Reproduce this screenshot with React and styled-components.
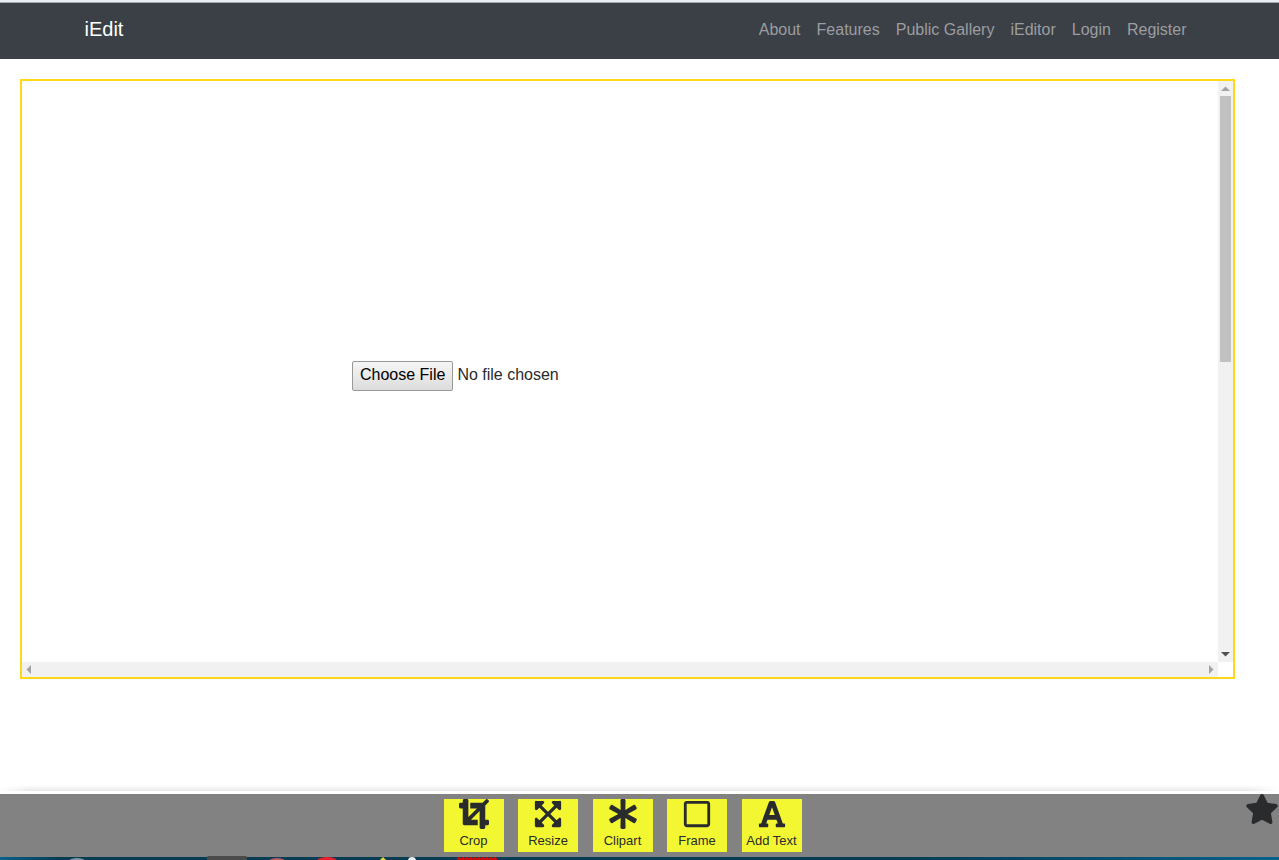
import React from 'react';
import styled, { createGlobalStyle } from 'styled-components';
import { FaCrop, FaExpandArrowsAlt, FaAsterisk, FaRegSquare, FaFont, FaStar } from 'react-icons/fa';

const Global = createGlobalStyle`
  *, *::before, *::after { box-sizing: border-box; }
  body {
    margin: 0;
    background: #fff;
    color: #292b2c;
    font: 16px/24px "Liberation Sans", Arial, sans-serif;
  }
`;

const Page = styled.div`
  display: flex;
  flex-direction: column;
  min-height: 100vh;
`;

const Header = styled.header`
  border-top: 2px solid #e9eef3;
  background: #3b3f46;
`;

const HeaderInner = styled.nav`
  display: flex;
  align-items: center;
  justify-content: space-between;
  height: 56px;
  max-width: 1140px;
  margin: 0 auto;
  padding: 0 15px 2px;
`;

const HeaderLine = styled.div`
  height: 1px;
  background: #aaa8ae;
`;

const Brand = styled.a`
  padding-bottom: 2px;
  color: #fff;
  font-size: 20px;
  line-height: 30px;
  text-decoration: none;
`;

const NavList = styled.ul`
  display: flex;
  margin: 0;
  padding: 0;
  list-style: none;
`;

const NavLink = styled.a`
  display: block;
  padding: 8px;
  color: #9b9da0;
  text-decoration: none;
`;

const Editor = styled.main`
  display: grid;
  grid-template-columns: 1fr 15px;
  grid-template-rows: 1fr 15px;
  width: 95%;
  height: 600px;
  margin: 20px 0 0 20px;
  border: 2px solid #ffd918;
`;

const Canvas = styled.div`
  display: flex;
  align-items: center;
  padding: 8px 0 0 330px;
`;

const FileInput = styled.input`
  width: 320px;
  height: 30px;
  color: #292b2c;
  font: inherit;
  &::file-selector-button {
    height: 30px;
    margin: 0 4px 0 0;
    padding: 0 7px 2px;
    border: 1px solid #999;
    border-radius: 2px;
    background: linear-gradient(#f6f6f6, #dcdcdc);
    color: #000;
    font: inherit;
  }
`;

const ScrollTrack = styled.div`
  display: flex;
  flex-direction: ${(p) => (p.$vertical ? 'column' : 'row')};
  align-items: center;
  justify-content: space-between;
  background: #f1f1f1;
`;

const Arrow = styled.svg`
  display: block;
  flex: none;
  width: 15px;
  height: 15px;
  fill: ${(p) => (p.$active ? '#505050' : '#a3a3a3')};
`;

const Thumb = styled.div`
  width: 11px;
  height: 266px;
  margin-bottom: auto;
  background: #c1c1c1;
`;

const Footer = styled.footer`
  margin-top: auto;
`;

const Shade = styled.div`
  height: 6px;
  margin-bottom: 3px;
  background: linear-gradient(#fff, #e9e9e9);
  mask-image: linear-gradient(to right, transparent, #000 30px, #000 calc(100% - 30px), transparent);
`;

const Toolbar = styled.div`
  display: flex;
  align-items: flex-start;
  height: 63px;
  background: #828282;
`;

const Tools = styled.div`
  display: flex;
  justify-content: space-between;
  width: 358px;
  margin: 5px auto 0;
`;

const Tool = styled.button`
  display: flex;
  flex-direction: column;
  align-items: center;
  width: 60px;
  height: 53px;
  padding: 0;
  border: 0;
  background: #f3f732;
  color: #292b2c;
  font: 13px/23px "Liberation Sans", Arial, sans-serif;
  white-space: nowrap;
  svg { flex: none; width: 30px; height: 30px; }
`;

const Favorite = styled.button`
  display: block;
  padding: 0;
  border: 0;
  background: none;
  color: #292b2c;
  svg { display: block; width: 34px; height: 30px; }
`;

const Dock = styled.svg`
  display: block;
  width: 100%;
  height: 3px;
  overflow: visible;
  background: linear-gradient(to right, #07618c, #073c52 60px, #073c52 70%, #07618c);
`;

const links = ['About', 'Features', 'Public Gallery', 'iEditor', 'Login', 'Register'];

const tools = [
  { label: 'Crop', Icon: FaCrop },
  { label: 'Resize', Icon: FaExpandArrowsAlt },
  { label: 'Clipart', Icon: FaAsterisk },
  { label: 'Frame', Icon: FaRegSquare },
  { label: 'Add Text', Icon: FaFont },
];

export default function App() {
  return (
    <Page>
      <Global />
      <Header>
        <HeaderLine />
        <HeaderInner>
          <Brand href="#">iEdit</Brand>
          <NavList>
            {links.map((l) => (
              <li key={l}><NavLink href="#">{l}</NavLink></li>
            ))}
          </NavList>
        </HeaderInner>
      </Header>
      <Editor>
        <Canvas>
          <FileInput type="file" aria-label="Image file" />
        </Canvas>
        <ScrollTrack $vertical>
          <Arrow viewBox="0 0 15 15"><path d="M3 10 7.500 5.500 12 10z" /></Arrow>
          <Thumb />
          <Arrow $active viewBox="0 0 15 15"><path d="M3 5 7.500 9.500 12 5z" /></Arrow>
        </ScrollTrack>
        <ScrollTrack>
          <Arrow viewBox="0 0 15 15"><path d="M9 3 4.500 7.500 9 12z" /></Arrow>
          <Arrow viewBox="0 0 15 15"><path d="M6 3 10.500 7.500 6 12z" /></Arrow>
        </ScrollTrack>
      </Editor>
      <Footer>
        <Shade />
        <Toolbar>
          <Tools>
            {tools.map(({ label, Icon }) => (
              <Tool key={label} type="button"><Icon />{label}</Tool>
            ))}
          </Tools>
          <Favorite type="button" aria-label="Favorite"><FaStar /></Favorite>
        </Toolbar>
        <Dock aria-hidden="true">
          <ellipse cx="77" cy="4" rx="8" ry="3" fill="#8194a3" />
          <path d="M207 3V0q0-1 2-1h36q2 0 2 1v3z" fill="#4b4b4b" />
          <ellipse cx="277" cy="4" rx="8" ry="3" fill="#b95c60" />
          <ellipse cx="327" cy="4" rx="10" ry="4" fill="#e7212c" />
          <path d="M380 3 383 0 386 3z" fill="#e8df28" />
          <circle cx="412" cy="4" r="4" fill="#eee" />
          <path d="M457 3V1h40v2z" fill="#c90b0b" />
          <path d="M458 0.500h39" stroke="#c90b0b" strokeDasharray="2 2" />
        </Dock>
      </Footer>
    </Page>
  );
}
